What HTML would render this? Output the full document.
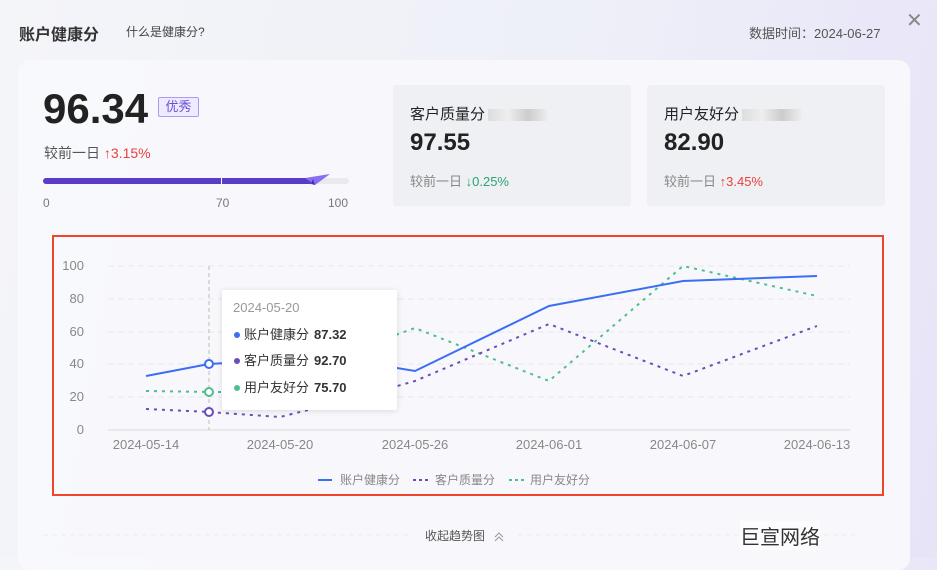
<!DOCTYPE html>
<html><head><meta charset="utf-8"><style>
*{margin:0;padding:0;box-sizing:border-box}
body{width:937px;height:557px;overflow:hidden;font-family:"Liberation Sans","Noto Sans CJK SC",sans-serif;background:linear-gradient(100deg,#f4f5f9 0%,#eef0f8 55%,#e8e4f8 100%);position:relative;color:#222}
.a{position:absolute}
.card{position:absolute;left:18px;top:60px;width:892px;height:510px;background:rgba(248,249,252,0.92);border-radius:12px}
.box{position:absolute;top:85px;width:238px;height:121px;background:#eef0f4;border-radius:3px}
.box .t{position:absolute;left:17px;top:18px;font-size:15px;color:#222}
.box .v{position:absolute;left:17px;top:44px;font-size:24px;font-weight:bold;color:#222}
.box .c{position:absolute;left:17px;top:86px;font-size:13px;color:#888}
.blur{display:inline-block;width:60px;height:12px;background:linear-gradient(90deg,#ddd,#eee,#ccc,#eee);vertical-align:middle;margin-left:3px}
</style></head><body>
<div class="a" style="left:19px;top:21px;font-size:16px;font-weight:bold;color:#333">账户健康分</div>
<div class="a" style="left:126px;top:23px;font-size:12px;color:#444">什么是健康分?</div>
<div class="a" style="left:749px;top:23px;font-size:13px;color:#555">数据时间：2024-06-27</div>
<div class="a" style="left:906px;top:8px;font-size:20px;color:#888">✕</div>
<div class="card"></div>
<div class="a" style="left:43px;top:85px;font-size:42px;font-weight:bold;color:#222">96.34</div>
<div class="a" style="left:158px;top:97px;width:41px;height:20px;border:1px solid #a99cf2;background:#efeaff;color:#6a4fd8;font-size:13px;text-align:center;line-height:18px;border-radius:2px">优秀</div>
<div class="a" style="left:44px;top:143px;font-size:14px;color:#555">较前一日 <span style="color:#e8413a">↑3.15%</span></div>
<div class="a" style="left:43px;top:178px;width:306px;height:6px;background:#e9eaef;border-radius:3px"></div>
<div class="a" style="left:43px;top:178px;width:270px;height:6px;background:#5a3cc8;border-radius:3px"></div>
<div class="a" style="left:221px;top:178px;width:1px;height:6px;background:#fff"></div>
<svg class="a" style="left:305px;top:172px" width="28" height="14"><polygon points="0,6 25,2 10,13" fill="#8a6ef0"/><polygon points="6,12 10,13 8,7" fill="#4a2cb8"/></svg>
<div class="a" style="left:43px;top:196px;font-size:12px;color:#777">0</div>
<div class="a" style="left:216px;top:196px;font-size:12px;color:#777">70</div>
<div class="a" style="left:328px;top:196px;font-size:12px;color:#777">100</div>
<div class="box" style="left:393px"><div class="t">客户质量分<span class="blur"></span></div><div class="v">97.55</div><div class="c">较前一日 <span style="color:#2ba471">↓0.25%</span></div></div>
<div class="box" style="left:647px"><div class="t">用户友好分<span class="blur"></span></div><div class="v">82.90</div><div class="c">较前一日 <span style="color:#e8413a">↑3.45%</span></div></div>
<div class="a" style="left:52px;top:235px;width:832px;height:261px;border:2px solid #f0452a"></div>
<svg class="a" style="left:0;top:0" width="937" height="557" font-family="Liberation Sans" font-size="13" fill="#888">
<g stroke="#e6e7ec" stroke-dasharray="6 4"><line x1="108" y1="266" x2="850" y2="266"/><line x1="108" y1="299" x2="850" y2="299"/><line x1="108" y1="332" x2="850" y2="332"/><line x1="108" y1="364" x2="850" y2="364"/><line x1="108" y1="397" x2="850" y2="397"/></g>
<line x1="108" y1="430" x2="850" y2="430" stroke="#d8d9de"/>
<line x1="209" y1="266" x2="209" y2="430" stroke="#bbb" stroke-dasharray="4 3"/>
<g text-anchor="end"><text x="84" y="270">100</text><text x="84" y="303">80</text><text x="84" y="336">60</text><text x="84" y="368">40</text><text x="84" y="401">20</text><text x="84" y="434">0</text></g>
<g text-anchor="middle"><text x="146" y="449">2024-05-14</text><text x="280" y="449">2024-05-20</text><text x="415" y="449">2024-05-26</text><text x="549" y="449">2024-06-01</text><text x="683" y="449">2024-06-07</text><text x="817" y="449">2024-06-13</text></g>
<polyline points="146,391 209,392 280,392 348,352 415,328 549,381 683,266 817,296" fill="none" stroke="#4cbf8f" stroke-width="2" stroke-dasharray="3 5"/>
<polyline points="146,409 209,412 280,417 348,400 415,381 549,324 683,376 817,326" fill="none" stroke="#6a4db8" stroke-width="2" stroke-dasharray="3 5"/>
<polyline points="146,376 209,364 280,360 348,360 415,371 549,306 683,281 817,276" fill="none" stroke="#3b6ef6" stroke-width="2"/>
<circle cx="209" cy="364" r="4" fill="#fff" stroke="#3b6ef6" stroke-width="2"/>
<circle cx="209" cy="392" r="4" fill="#fff" stroke="#4cbf8f" stroke-width="2"/>
<circle cx="209" cy="412" r="4" fill="#fff" stroke="#6a4db8" stroke-width="2"/>
<rect x="222" y="290" width="175" height="120" fill="#fff" rx="2" style="filter:drop-shadow(0 1px 3px rgba(0,0,0,.12))"/>
<text x="233" y="312" font-size="13" fill="#999">2024-05-20</text>
<g font-size="13" fill="#333"><circle cx="237" cy="335" r="3" fill="#3b6ef6"/><text x="244" y="339">账户健康分</text><text x="314" y="339" font-weight="bold">87.32</text>
<circle cx="237" cy="361" r="3" fill="#6a4db8"/><text x="244" y="365">客户质量分</text><text x="314" y="365" font-weight="bold">92.70</text>
<circle cx="237" cy="388" r="3" fill="#4cbf8f"/><text x="244" y="392">用户友好分</text><text x="314" y="392" font-weight="bold">75.70</text></g>
<g font-size="12" fill="#888"><line x1="318" y1="480" x2="332" y2="480" stroke="#3b6ef6" stroke-width="2"/><text x="340" y="484">账户健康分</text>
<line x1="413" y1="480" x2="428" y2="480" stroke="#6a4db8" stroke-width="2" stroke-dasharray="3 3"/><text x="435" y="484">客户质量分</text>
<line x1="509" y1="480" x2="524" y2="480" stroke="#4cbf8f" stroke-width="2" stroke-dasharray="3 3"/><text x="530" y="484">用户友好分</text></g>
<g stroke="#ececf0" stroke-dasharray="5 4"><line x1="43" y1="535" x2="410" y2="535"/><line x1="518" y1="535" x2="855" y2="535"/></g>
<text x="425" y="540" font-size="12" fill="#555">收起趋势图</text>
<path d="M495 537 l4 -4 l4 4 M495 541 l4 -4 l4 4" stroke="#999" fill="none"/>
</svg>
<div class="a" style="left:740px;top:521px;font-size:20px;color:#333;background:rgba(255,255,255,.6)">巨宣网络</div>
</body></html>
